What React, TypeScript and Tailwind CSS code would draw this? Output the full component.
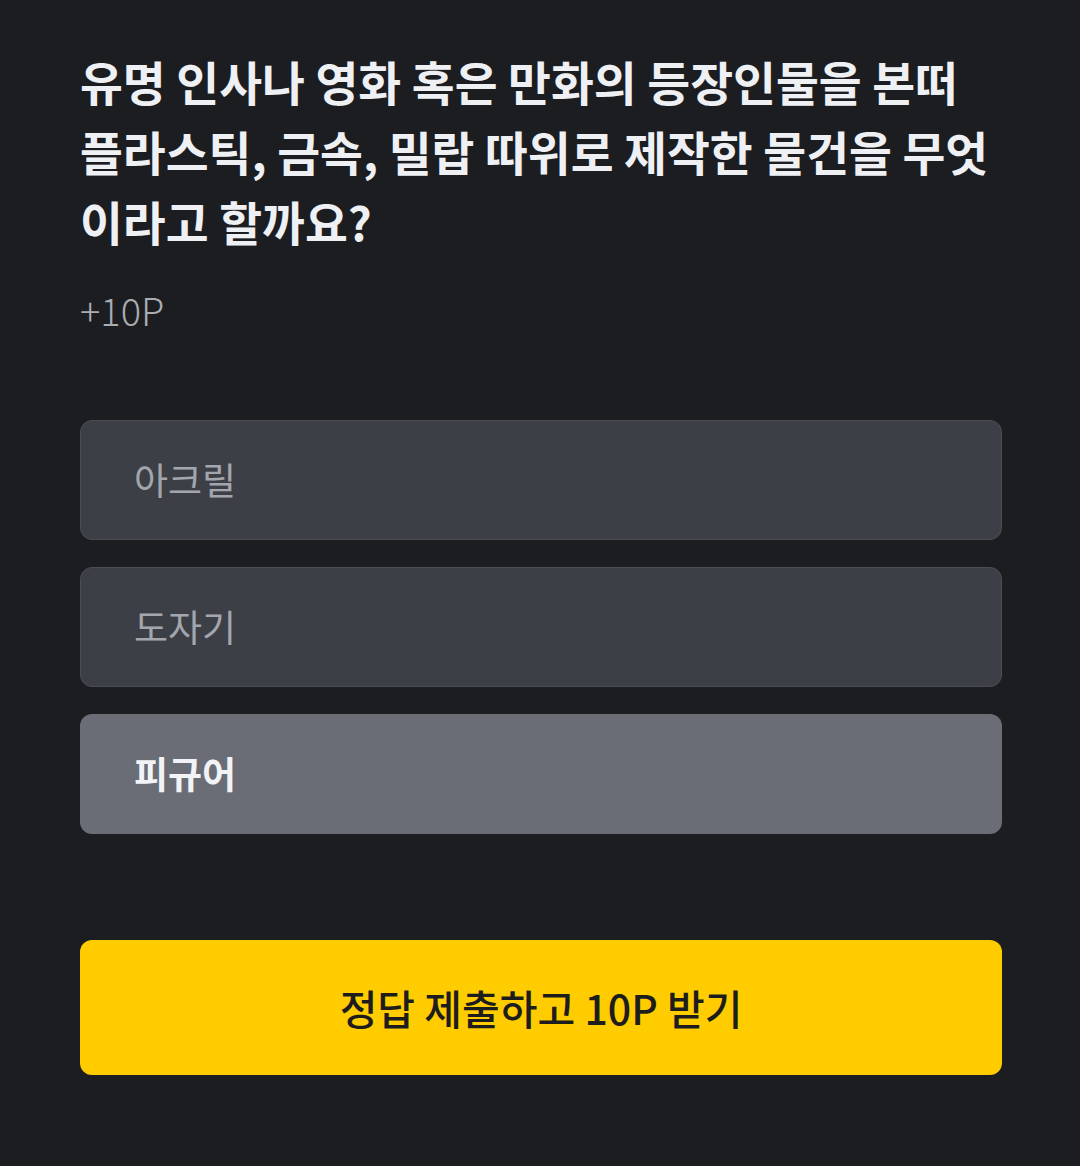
import React from "react";

export default function App() {
  const font = { fontFamily: '"Noto Sans CJK KR", "Noto Sans", sans-serif' };
  return (
    <div className="w-[1080px] h-[1166px] bg-[#1c1d21] pl-[80px] pt-[46px] box-border" style={font}>
      <div className="w-[922px]">
        <h1 className="text-[46.6px] leading-[70px] font-bold text-[#eef0f4] whitespace-nowrap">
          유명 인사나 영화 혹은 만화의 등장인물을 본떠
          <br />
          플라스틱, 금속, 밀랍 따위로 제작한 물건을 무엇
          <br />
          이라고 할까요?
        </h1>
        <div className="mt-[30px] text-[38px] leading-[48px] text-[#a9acb2] font-light">+10P</div>
        <div className="mt-[86px] flex flex-col gap-[27px]">
          <div className="h-[120px] rounded-[12px] bg-[#3d3f47] border border-[#4b4d55] flex items-center pl-[53px] text-[37px] text-[#a3a6ad]">
            아크릴
          </div>
          <div className="h-[120px] rounded-[12px] bg-[#3d3f47] border border-[#4b4d55] flex items-center pl-[53px] text-[37px] text-[#a3a6ad]">
            도자기
          </div>
          <div className="h-[120px] rounded-[12px] bg-[#6a6d76] flex items-center pl-[54px] text-[37px] font-bold text-[#f2f3f6]">
            피규어
          </div>
        </div>
        <button className="mt-[106px] w-full h-[135px] rounded-[12px] bg-[#ffcc00] flex items-center justify-center text-[41px] font-medium text-[#1d1d1d]">
          정답 제출하고 10P 받기
        </button>
      </div>
    </div>
  );
}
